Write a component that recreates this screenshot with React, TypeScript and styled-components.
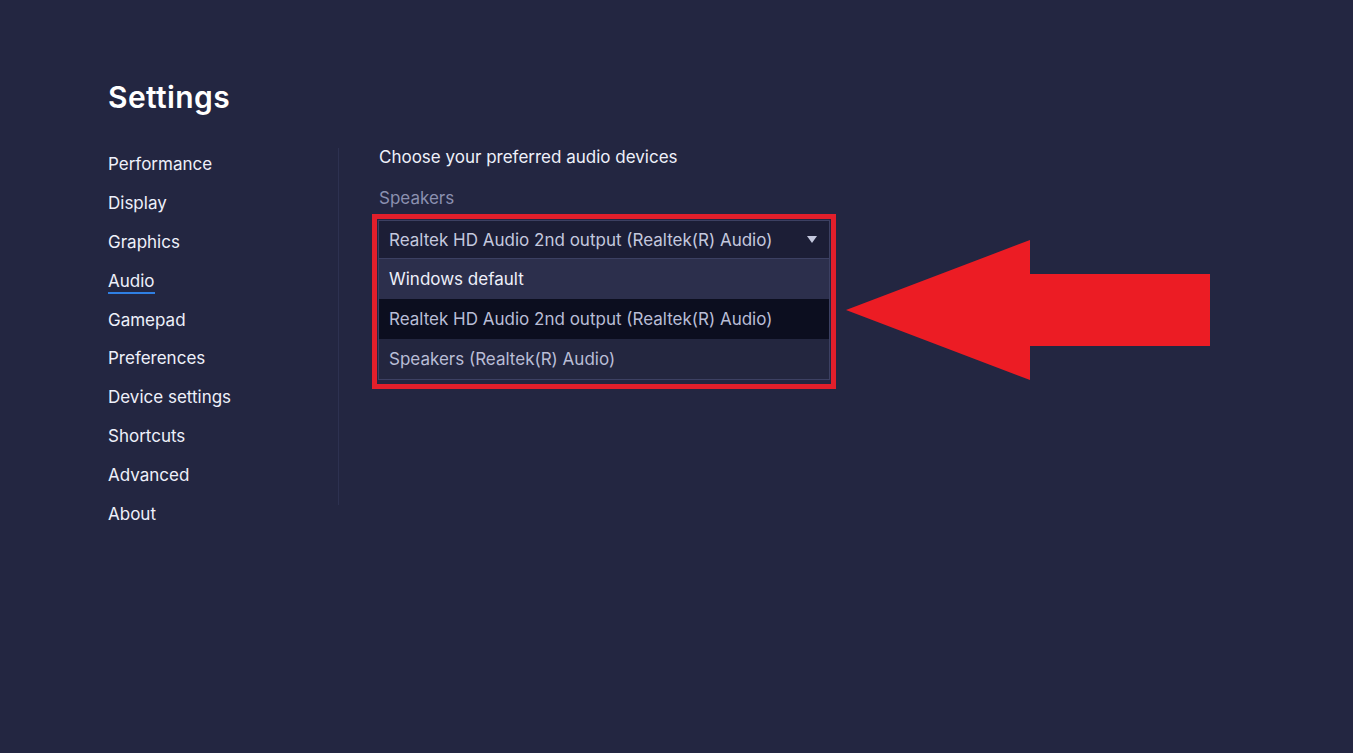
import React from "react";
import styled, { createGlobalStyle } from "styled-components";

const Global = createGlobalStyle`
  html, body { margin: 0; padding: 0; background: #232641; }
  body { font-family: Inter, "Noto Sans", sans-serif; }
`;

const Page = styled.div`
  position: relative;
  width: 1353px;
  height: 753px;
  background: #232641;
  padding: 77px 0 0 108px;
  box-sizing: border-box;
`;

const Title = styled.h1`
  margin: 0;
  font-size: 30px;
  font-weight: 600;
  color: #ffffff;
  line-height: 40px;
  letter-spacing: 0.4px;
`;

const Body = styled.div`
  display: flex;
  margin-top: 28px;
`;

const Sidebar = styled.nav`
  display: flex;
  flex-direction: column;
  width: 230px;
`;

const Divider = styled.div`
  width: 1px;
  height: 357px;
  background: #2d3150;
  margin-top: 3px;
`;

const NavItem = styled.div<{ $active?: boolean }>`
  height: 38.8px;
  display: flex;
  align-items: center;
  font-size: 17px;
  color: #eef0fa;
  span {
    position: relative;
  }
  span::after {
    content: "";
    position: absolute;
    left: 0;
    right: 0;
    bottom: -3px;
    height: 2px;
    background: ${(p) => (p.$active ? "#2f7fe3" : "transparent")};
  }
`;

const Content = styled.div`
  display: flex;
  flex-direction: column;
  padding-left: 40px;
`;

const Heading = styled.div`
  font-size: 17px;
  color: #eef0fa;
  line-height: 24px;
`;

const Label = styled.div`
  font-size: 17px;
  color: #8b90b0;
  line-height: 24px;
  margin-top: 17px;
`;

const Highlight = styled.div`
  margin-top: 4px;
  margin-left: -7px;
  width: 452px;
  border: 5px solid #e21f2b;
  padding: 1px 1px 4px 1px;
  background: #232641;
`;

const Select = styled.div`
  border: 1px solid #3c4062;
  background: #1e2039;
`;

const SelectHeader = styled.div`
  height: 37px;
  display: flex;
  align-items: center;
  justify-content: space-between;
  padding: 0 12px 0 10px;
  font-size: 17px;
  color: #c4c8de;
  background: #1c1e36;
  border-bottom: 1px solid #3c4062;
`;

const Caret = styled.div`
  width: 0;
  height: 0;
  border-left: 5px solid transparent;
  border-right: 5px solid transparent;
  border-top: 7px solid #c4c8de;
`;

const Option = styled.div<{ $variant: "light" | "dark" | "normal" }>`
  height: 40px;
  display: flex;
  align-items: center;
  padding-left: 10px;
  font-size: 17px;
  color: ${(p) => (p.$variant === "light" ? "#eef0fa" : "#b9bdd6")};
  background: ${(p) =>
    p.$variant === "light" ? "#2c2f4c" : p.$variant === "dark" ? "#0c0e1f" : "#23263f"};
`;

const ArrowSvg = styled.svg`
  position: absolute;
  left: 0;
  top: 0;
  pointer-events: none;
`;

const items = [
  "Performance",
  "Display",
  "Graphics",
  "Audio",
  "Gamepad",
  "Preferences",
  "Device settings",
  "Shortcuts",
  "Advanced",
  "About",
];

export default function App() {
  return (
    <>
      <Global />
      <Page>
        <Title>Settings</Title>
        <Body>
          <Sidebar>
            {items.map((it) => (
              <NavItem key={it} $active={it === "Audio"}>
                <span>{it}</span>
              </NavItem>
            ))}
          </Sidebar>
          <Divider />
          <Content>
            <Heading>Choose your preferred audio devices</Heading>
            <Label>Speakers</Label>
            <Highlight>
              <Select>
                <SelectHeader>
                  <span>Realtek HD Audio 2nd output (Realtek(R) Audio)</span>
                  <Caret />
                </SelectHeader>
                <Option $variant="light">Windows default</Option>
                <Option $variant="dark">Realtek HD Audio 2nd output (Realtek(R) Audio)</Option>
                <Option $variant="normal">Speakers (Realtek(R) Audio)</Option>
              </Select>
            </Highlight>
          </Content>
        </Body>
        <ArrowSvg width="1353" height="753" viewBox="0 0 1353 753">
          <polygon
            points="846,310 1030,240 1030,274 1210,274 1210,346 1030,346 1030,380"
            fill="#ec1c24"
          />
        </ArrowSvg>
      </Page>
    </>
  );
}
